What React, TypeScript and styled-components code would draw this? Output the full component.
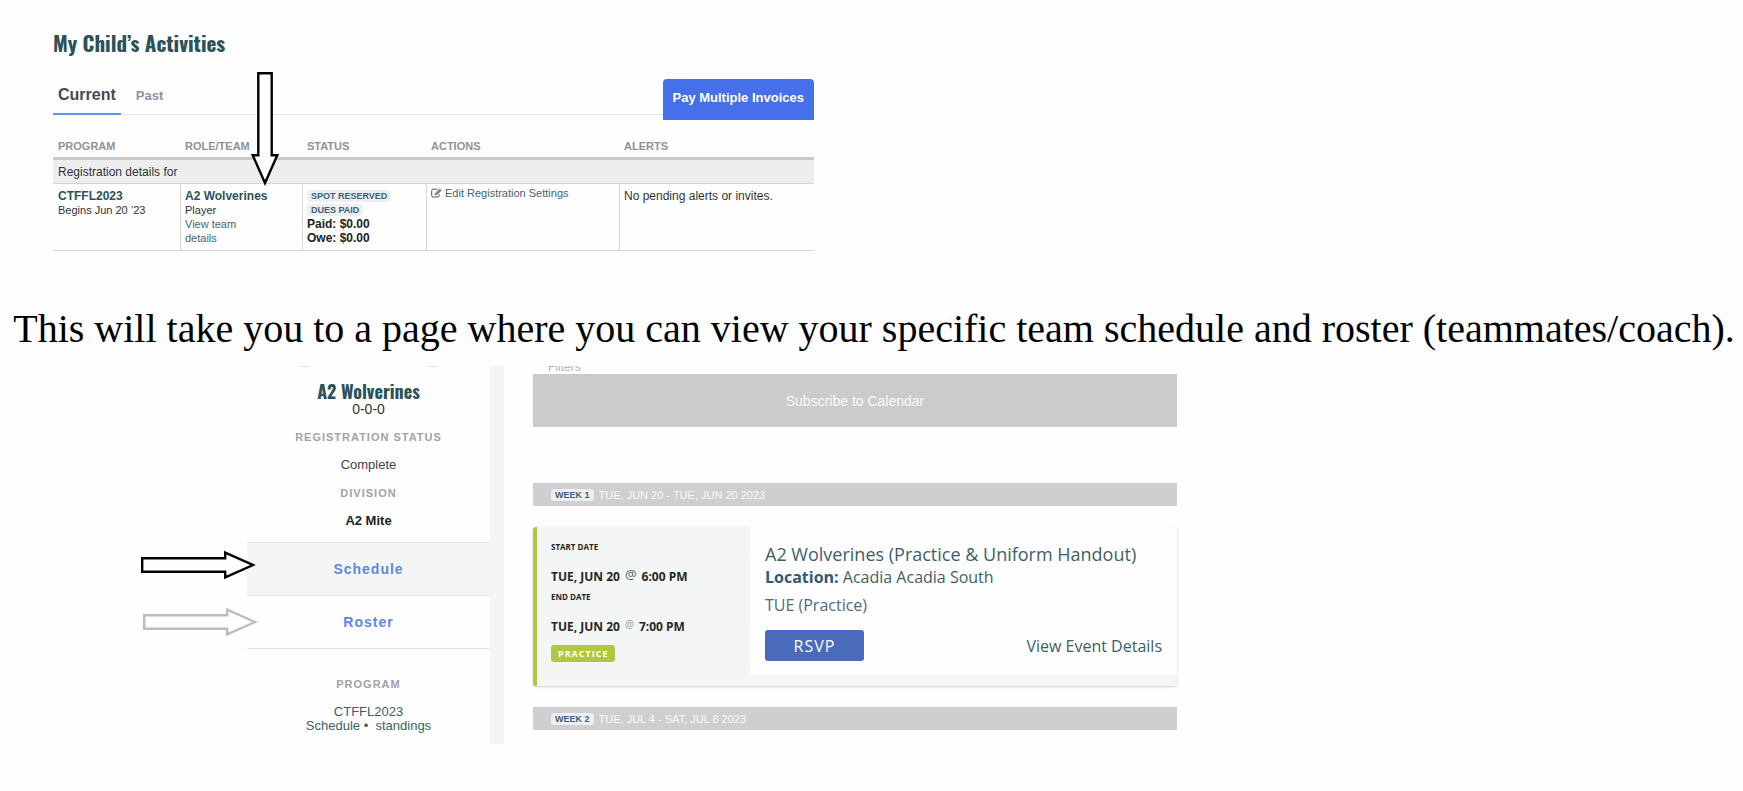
import React from "react";
import styled, { createGlobalStyle } from "styled-components";

const sans = `"Liberation Sans", Arial, sans-serif`;
const open = `"Open Sans", sans-serif`;
const display = `Oswald, "Liberation Sans Narrow", "Open Sans Condensed", Roboto, sans-serif`;

const teal = "#2b5259";
const slate = "#3e6079";
const fog = "#f4f6f6";

const GlobalStyle = createGlobalStyle`
  *, *::before, *::after { box-sizing: border-box; }
  body { margin: 0; background: #fefefe; color: #333; font-family: ${sans}; font-size: 12px; }
  a { color: inherit; text-decoration: none; }
  button { font-family: inherit; border: 0; padding: 0; background: none; cursor: pointer; }
  h1, h2, h3, p, dl, dd { margin: 0; }
`;

const Page = styled.main`
  display: flex;
  flex-direction: column;
  padding-bottom: 48px;
`;

/* Activities */

const Activities = styled.section`
  position: relative;
  max-width: 814px;
  padding: 27px 0 0 53px;
`;

const DisplayHeading = styled.h1<{ $size: number; $line: number }>`
  font: 700 ${(p) => p.$size}px/${(p) => p.$line}px ${display};
  color: ${teal};
`;

const TabBar = styled.div`
  display: flex;
  align-items: flex-start;
  height: 55px;
  margin-top: 16px;
  padding-top: 4px;
`;

const Tabs = styled.nav`
  display: flex;
  flex: 1;
  align-items: flex-end;
  height: 36px;
  border-bottom: 1px solid #e4e6e8;
`;

const Tab = styled.button<{ $active?: boolean }>`
  height: 36px;
  margin-bottom: -1px;
  padding: 0 5px ${(p) => (p.$active ? 2 : 0)}px;
  font-weight: 700;
  font-size: ${(p) => (p.$active ? 16 : 13)}px;
  line-height: 20px;
  color: ${(p) => (p.$active ? "#444a57" : "#8b94a6")};
  border-bottom: 2px solid ${(p) => (p.$active ? "#5a96f0" : "transparent")};
  & + & { margin-left: 10px; }
`;

const PayButton = styled.button`
  height: 41px;
  padding: 0 10px 4px;
  border-radius: 4px 4px 0 0;
  background: #466fea;
  color: #fff;
  font-weight: 700;
  font-size: 13px;
`;

const Table = styled.table`
  width: 100%;
  table-layout: fixed;
  border-collapse: separate;
  border-spacing: 0;
`;

const HeadCell = styled.th`
  height: 30px;
  padding: 0 5px 4px;
  vertical-align: bottom;
  text-align: left;
  font-size: 11px;
  line-height: 14px;
  color: #929292;
  border-bottom: 3px solid #c9c9c9;
`;

const GroupCell = styled.th`
  height: 24px;
  padding: 0 5px;
  text-align: left;
  font-weight: 400;
  background: #eee;
  border-bottom: 1px solid #d6d6d6;
`;

const Cell = styled.td<{ $tight?: boolean }>`
  height: 67px;
  padding: ${(p) => (p.$tight ? 2 : 5)}px 5px 0 4px;
  vertical-align: top;
  font-size: 12px;
  line-height: 14px;
  border-bottom: 1px solid #d6d6d6;
  border-left: 1px solid #d6d6d6;
  &:first-child { border-left: 0; padding-left: 5px; }
`;

const StrongLink = styled.a`
  font-weight: 700;
  color: ${teal};
`;

const Small = styled.div<{ $narrow?: boolean }>`
  max-width: ${(p) => (p.$narrow ? "70px" : "none")};
  font-size: 11px;
`;

const TealLink = styled.a`
  color: #3f666c;
`;

const ActionLink = styled(TealLink)`
  display: flex;
  align-items: center;
  gap: 3px;
  font-size: 11px;
`;

const StatusStack = styled.div`
  display: flex;
  flex-direction: column;
  align-items: flex-start;
  font-weight: 700;
  color: #222;
`;

const Badge = styled.span`
  margin: 1px 0;
  padding: 0 4px;
  border-radius: 3px;
  background: #edf0f1;
  color: ${slate};
  font: 700 9px/12px ${sans};
`;

const Intro = styled.p`
  margin-top: 52px;
  padding-left: 5px;
  font: 40px/52px "Liberation Serif", "Times New Roman", serif;
  color: #000;
  text-align: center;
`;

/* Team page */

const TeamPage = styled.section`
  position: relative;
  display: flex;
  align-items: stretch;
  max-width: 1177px;
  margin-top: 11px;
  padding-left: 247px;
`;

const Sidebar = styled.aside`
  position: relative;
  display: flex;
  flex-direction: column;
  flex: 0 0 257px;
  min-height: 378px;
  padding-top: 15px;
  border-right: 14px solid ${fog};
  text-align: center;
  font-size: 13px;
`;

const Crest = styled.svg`
  position: absolute;
  top: 0;
  left: 50px;
`;

const Score = styled.p`
  font-size: 14px;
  line-height: 16px;
`;

const Facts = styled.dl`
  margin-top: 6px;
`;

const Label = styled.dt`
  font-weight: 700;
  font-size: 11px;
  line-height: 28px;
  letter-spacing: 1px;
  color: #a2a2a2;
`;

const Value = styled.dd<{ $bold?: boolean }>`
  line-height: 28px;
  color: ${(p) => (p.$bold ? "#222" : "#444")};
  font-weight: ${(p) => (p.$bold ? 700 : 400)};
`;

const SideNav = styled.nav`
  display: flex;
  flex-direction: column;
  margin-top: 7px;
  border-top: 1px solid #e2e5e5;
`;

const SideLink = styled.a<{ $active?: boolean }>`
  height: 53px;
  line-height: 52px;
  border-bottom: 1px solid #e2e5e5;
  background: ${(p) => (p.$active ? fog : "transparent")};
  color: #5f86e4;
  font-weight: 700;
  font-size: 14px;
  letter-spacing: 1px;
`;

const ProgramFacts = styled.dl`
  margin-top: 21px;
`;

const ProgramValue = styled.dd`
  padding-top: 7px;
  line-height: 14px;
  color: #3f5f66;
`;

const Content = styled.div`
  display: flex;
  flex-direction: column;
  flex: 1;
  min-width: 0;
  padding-left: 29px;
`;

const FilterLabel = styled.div`
  display: flex;
  align-items: flex-end;
  height: 8px;
  padding-left: 15px;
  overflow: hidden;
  line-height: 14px;
  color: #b0b0b0;
`;

const Subscribe = styled.button`
  height: 53px;
  background: #cbcbcb;
  color: #fafafa;
  font-size: 14px;
`;

const WeekBar = styled.h2`
  display: flex;
  align-items: center;
  gap: 5px;
  height: 23px;
  padding-left: 18px;
  background: #cfcfcf;
  color: #fafafa;
  font-weight: 400;
  font-size: 11px;
`;

const WeekBlock = styled.div<{ $gap: number }>`
  display: flex;
  flex-direction: column;
  gap: 21px;
  margin-top: ${(p) => p.$gap}px;
`;

const EventCard = styled.article`
  display: flex;
  min-height: 159px;
  padding-bottom: 11px;
  border-left: 4px solid #b2c740;
  border-radius: 3px;
  background: ${fog};
  box-shadow: 0 1px 3px rgba(0, 0, 0, 0.18);
  font-family: ${open};
`;

const Dates = styled.div`
  flex: 0 0 213px;
  padding: 12px 14px 0;
  color: #262626;
  font-weight: 700;
`;

const DateLabel = styled.div`
  font-size: 8px;
  line-height: 16px;
`;

const DateValue = styled.div`
  display: flex;
  align-items: center;
  gap: 5px;
  height: 34px;
  padding-top: 8px;
  font-size: 12px;
`;

const At = styled.span<{ $muted?: boolean }>`
  padding-bottom: 4px;
  font-weight: 400;
  color: ${(p) => (p.$muted ? "#8b93a8" : slate)};
  font-size: ${(p) => (p.$muted ? 10 : 13)}px;
`;

const Tag = styled.span`
  display: inline-block;
  height: 17px;
  margin-top: 6px;
  padding: 0 6px 0 7px;
  border-radius: 3px;
  background: #b2c740;
  color: #fff;
  font-size: 9px;
  line-height: 18px;
  letter-spacing: 1px;
`;

const Details = styled.div`
  display: flex;
  flex-direction: column;
  flex: 1;
  padding: 14px 15px 0;
  background: #fefefe;
  font-size: 16px;
  color: #3f6067;
`;

const EventTitle = styled.h3`
  font-weight: 400;
  font-size: 18px;
  line-height: 26px;
`;

const DetailLine = styled.p<{ $slate?: boolean }>`
  line-height: ${(p) => (p.$slate ? 34 : 21)}px;
  color: ${(p) => (p.$slate ? "#4d6c86" : "inherit")};
  b { color: #2f5a78; }
`;

const EventActions = styled.div`
  display: flex;
  justify-content: space-between;
  align-items: center;
  margin-top: 8px;
`;

const Rsvp = styled.button`
  width: 99px;
  height: 31px;
  border-radius: 3px;
  background: #4a6abb;
  color: #fff;
  font-size: 16px;
  letter-spacing: 1px;
`;

/* Pointers drawn over the two panels */

const Pointer = styled.svg<{ $x: number; $y: number }>`
  position: absolute;
  left: ${(p) => p.$x}px;
  top: ${(p) => p.$y}px;
`;

function RightArrow({ x, y, color }: { x: number; y: number; color: string }) {
  return (
    <Pointer $x={x} $y={y} width="118" height="32" viewBox="0 0 118 32" aria-hidden="true">
      <path d="M2.200 9.300H85.200V3.700L113 16L85.200 28.300V22.700H2.200Z" fill="#fefefe" stroke={color} strokeWidth="2.400" />
    </Pointer>
  );
}

function EditIcon() {
  return (
    <svg width="11" height="10" viewBox="0 0 11 10" fill="none" stroke="#3f666c" aria-hidden="true">
      <path d="M6.500 1.200H2Q.700 1.200.700 2.500V7.800Q.700 9 2 9H7Q8.300 9 8.300 7.800V6.300" />
      <path d="M4 6.900L4.300 5.100L8.600.900L10.200 2.500L5.900 6.700Z" strokeWidth=".8" />
      <path d="M5.300 5.900L9.300 2" strokeWidth="1.200" />
    </svg>
  );
}

export default function App() {
  return (
    <>
      <GlobalStyle />
      <Page>
        <Activities>
          <DisplayHeading $size={21} $line={32}>My Child’s Activities</DisplayHeading>
          <TabBar>
            <Tabs>
              <Tab $active>Current</Tab>
              <Tab>Past</Tab>
            </Tabs>
            <PayButton>Pay Multiple Invoices</PayButton>
          </TabBar>
          <Table>
            <colgroup>
              <col width="127" />
              <col width="122" />
              <col width="124" />
              <col width="193" />
              <col />
            </colgroup>
            <thead>
              <tr>
                <HeadCell scope="col">PROGRAM</HeadCell>
                <HeadCell scope="col">ROLE/TEAM</HeadCell>
                <HeadCell scope="col">STATUS</HeadCell>
                <HeadCell scope="col">ACTIONS</HeadCell>
                <HeadCell scope="col">ALERTS</HeadCell>
              </tr>
            </thead>
            <tbody>
              <tr>
                <GroupCell colSpan={5}>Registration details for</GroupCell>
              </tr>
              <tr>
                <Cell>
                  <StrongLink href="#program">CTFFL2023</StrongLink>
                  <Small>Begins Jun 20 ’23</Small>
                </Cell>
                <Cell>
                  <StrongLink href="#team">A2 Wolverines</StrongLink>
                  <Small>Player</Small>
                  <Small $narrow><TealLink href="#team">View team details</TealLink></Small>
                </Cell>
                <Cell>
                  <StatusStack>
                    <Badge>SPOT RESERVED</Badge>
                    <Badge>DUES PAID</Badge>
                    <span>Paid: $0.00</span>
                    <span>Owe: $0.00</span>
                  </StatusStack>
                </Cell>
                <Cell $tight>
                  <ActionLink href="#settings"><EditIcon />Edit Registration Settings</ActionLink>
                </Cell>
                <Cell>No pending alerts or invites.</Cell>
              </tr>
            </tbody>
          </Table>
          <Pointer $x={249} $y={70} width="32" height="118" viewBox="0 0 32 118" aria-hidden="true">
            <path d="M9.300 3.200H22.700V85.200H28.300L16 113L3.700 85.200H9.300Z" fill="#fefefe" stroke="#000" strokeWidth="2.400" />
          </Pointer>
        </Activities>

        <Intro>
          This will take you to a page where you can view your specific team schedule and roster (teammates/coach).
        </Intro>

        <TeamPage>
          <Sidebar>
            <Crest width="144" height="3" viewBox="0 0 144 3" fill="#d9d9d9" aria-hidden="true">
              <path d="M3 0H13L11 1H5ZM131 0H141L139 1H133Z" />
            </Crest>
            <DisplayHeading as="h2" $size={18} $line={20}>A2 Wolverines</DisplayHeading>
            <Score>0-0-0</Score>
            <Facts>
              <Label>REGISTRATION STATUS</Label>
              <Value>Complete</Value>
              <Label>DIVISION</Label>
              <Value $bold>A2 Mite</Value>
            </Facts>
            <SideNav>
              <SideLink href="#schedule" $active>Schedule</SideLink>
              <SideLink href="#roster">Roster</SideLink>
            </SideNav>
            <ProgramFacts>
              <Label>PROGRAM</Label>
              <ProgramValue>
                <a href="#program">CTFFL2023</a>
                <br />
                <a href="#program-schedule">Schedule</a> •&nbsp; <a href="#standings">standings</a>
              </ProgramValue>
            </ProgramFacts>
          </Sidebar>
          <Content>
            <FilterLabel>Filters</FilterLabel>
            <Subscribe>Subscribe to Calendar</Subscribe>
            <WeekBlock $gap={56}>
              <WeekBar><Badge>WEEK 1</Badge>TUE, JUN 20 - TUE, JUN 20 2023</WeekBar>
              <EventCard>
                <Dates>
                  <DateLabel>START DATE</DateLabel>
                  <DateValue>TUE, JUN 20 <At>@</At> 6:00 PM</DateValue>
                  <DateLabel>END DATE</DateLabel>
                  <DateValue>TUE, JUN 20 <At $muted>@</At> 7:00 PM</DateValue>
                  <Tag>PRACTICE</Tag>
                </Dates>
                <Details>
                  <EventTitle>A2 Wolverines (Practice &amp; Uniform Handout)</EventTitle>
                  <DetailLine><b>Location:</b> Acadia Acadia South</DetailLine>
                  <DetailLine $slate>TUE (Practice)</DetailLine>
                  <EventActions>
                    <Rsvp>RSVP</Rsvp>
                    <a href="#event">View Event Details</a>
                  </EventActions>
                </Details>
              </EventCard>
            </WeekBlock>
            <WeekBlock $gap={21}>
              <WeekBar><Badge>WEEK 2</Badge>TUE, JUL 4 - SAT, JUL 8 2023</WeekBar>
            </WeekBlock>
          </Content>
          <RightArrow x={140} y={183} color="#000" />
          <RightArrow x={142} y={240} color="#bdbdbd" />
        </TeamPage>
      </Page>
    </>
  );
}
